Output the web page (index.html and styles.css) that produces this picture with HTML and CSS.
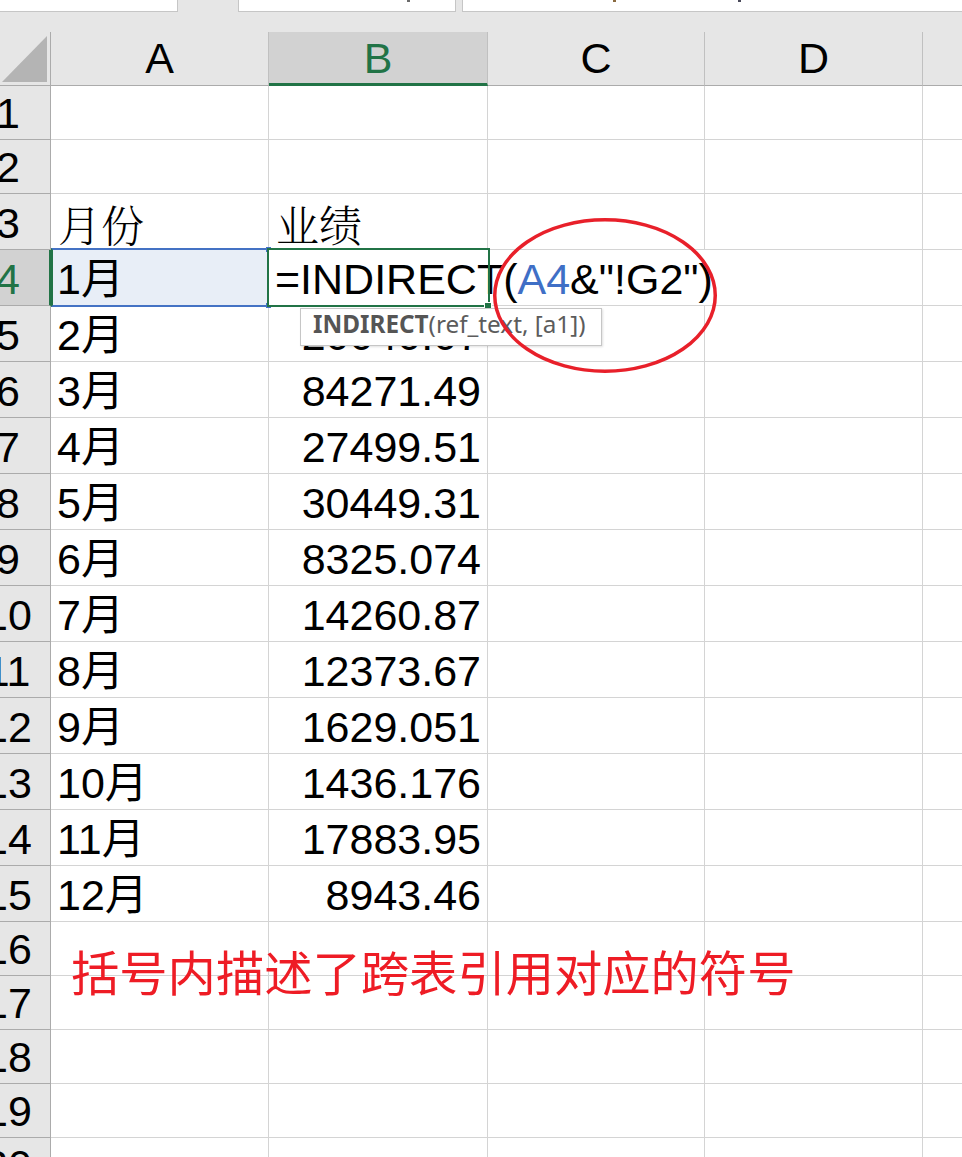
FILE: index.html
```html
<!DOCTYPE html>
<html lang="zh-CN">
<head>
<meta charset="utf-8">
<title>INDIRECT</title>
<link rel="stylesheet" href="styles.css">
</head>
<body>
<div class="topbar">
  <div class="tb tb1"></div>
  <div class="tb-gap1"></div>
  <div class="tb tb2"><span class="mark m1"></span></div>
  <div class="tb-gap2"></div>
  <div class="tb tb3"><span class="mark m2"></span><span class="mark m3"></span></div>
</div>
<div class="sheet">
  <div class="corner"><div class="tri"></div></div>
  <div class="ch">A</div>
  <div class="ch ch-active">B</div>
  <div class="ch">C</div>
  <div class="ch">D</div>
  <div class="ch ch-e"></div>

  <div class="rh"><span>1</span></div><div class="c"></div><div class="c"></div><div class="c"></div><div class="c"></div><div class="c e"></div>
  <div class="rh"><span>2</span></div><div class="c"></div><div class="c"></div><div class="c"></div><div class="c"></div><div class="c e"></div>
  <div class="rh"><span>3</span></div><div class="c song">月份</div><div class="c song">业绩</div><div class="c"></div><div class="c"></div><div class="c e"></div>
  <div class="rh rh-active"><span>4</span></div><div class="c range">1月</div><div class="c active">=INDIRECT(<span class="ref">A4</span>&amp;"!G2")</div><div class="c nogrid"></div><div class="c"></div><div class="c e"></div>
  <div class="rh"><span>5</span></div><div class="c">2月</div><div class="c num">20040.07</div><div class="c"></div><div class="c"></div><div class="c e"></div>
  <div class="rh"><span>6</span></div><div class="c">3月</div><div class="c num">84271.49</div><div class="c"></div><div class="c"></div><div class="c e"></div>
  <div class="rh"><span>7</span></div><div class="c">4月</div><div class="c num">27499.51</div><div class="c"></div><div class="c"></div><div class="c e"></div>
  <div class="rh"><span>8</span></div><div class="c">5月</div><div class="c num">30449.31</div><div class="c"></div><div class="c"></div><div class="c e"></div>
  <div class="rh"><span>9</span></div><div class="c">6月</div><div class="c num">8325.074</div><div class="c"></div><div class="c"></div><div class="c e"></div>
  <div class="rh"><span>10</span></div><div class="c">7月</div><div class="c num">14260.87</div><div class="c"></div><div class="c"></div><div class="c e"></div>
  <div class="rh"><span>11</span></div><div class="c">8月</div><div class="c num">12373.67</div><div class="c"></div><div class="c"></div><div class="c e"></div>
  <div class="rh"><span>12</span></div><div class="c">9月</div><div class="c num">1629.051</div><div class="c"></div><div class="c"></div><div class="c e"></div>
  <div class="rh"><span>13</span></div><div class="c">10月</div><div class="c num">1436.176</div><div class="c"></div><div class="c"></div><div class="c e"></div>
  <div class="rh"><span>14</span></div><div class="c">11月</div><div class="c num">17883.95</div><div class="c"></div><div class="c"></div><div class="c e"></div>
  <div class="rh"><span>15</span></div><div class="c">12月</div><div class="c num">8943.46</div><div class="c"></div><div class="c"></div><div class="c e"></div>
  <div class="rh"><span>16</span></div><div class="c"></div><div class="c"></div><div class="c"></div><div class="c"></div><div class="c e"></div>
  <div class="rh"><span>17</span></div><div class="c"></div><div class="c"></div><div class="c"></div><div class="c"></div><div class="c e"></div>
  <div class="rh"><span>18</span></div><div class="c"></div><div class="c"></div><div class="c"></div><div class="c"></div><div class="c e"></div>
  <div class="rh"><span>19</span></div><div class="c"></div><div class="c"></div><div class="c"></div><div class="c"></div><div class="c e"></div>
  <div class="rh"><span>20</span></div><div class="c"></div><div class="c"></div><div class="c"></div><div class="c"></div><div class="c e"></div>
</div>

<div class="tooltip"><b>INDIRECT</b>(ref_text, [a1])</div>

<svg class="circle" width="230" height="162" viewBox="0 0 230 162" aria-hidden="true">
  <ellipse cx="115" cy="80.5" rx="110.25" ry="75.75" fill="none" stroke="#e8202a" stroke-width="3.5"/>
</svg>

<div class="note">括号内描述了跨表引用对应的符号</div>
</body>
</html>
```

FILE: styles.css
```css
* {
  box-sizing: border-box;
  margin: 0;
  padding: 0;
}

html,
body {
  width: 962px;
  height: 1157px;
  overflow: hidden;
  background: #e6e6e6;
}

body {
  position: relative;
  font-family: "Liberation Sans", Arial, "Noto Sans CJK SC", sans-serif;
  color: #000;
}

/* ---------- top strip ---------- */
.topbar {
  display: flex;
  align-items: flex-start;
  height: 32px;
}

.tb {
  height: 12px;
  background: #fff;
  border-bottom: 1px solid #c6c6c6;
  display: flex;
  align-items: flex-start;
}

.tb1 {
  width: 178px;
  border-right: 1px solid #c6c6c6;
}

.tb-gap1 {
  width: 60px;
}

.tb2 {
  width: 218px;
  border-left: 1px solid #c6c6c6;
  border-right: 1px solid #c6c6c6;
}

.tb-gap2 {
  width: 6px;
}

.tb3 {
  flex: 1;
  border-left: 1px solid #c6c6c6;
}

.mark {
  display: block;
  width: 3px;
  height: 2px;
  background: #6b6b6b;
}

.m1 {
  margin-left: 168px;
}

.m2 {
  margin-left: 150px;
  background: #8a6a40;
}

.m3 {
  margin-left: 122px;
  background: #4a4a5a;
}

/* ---------- sheet grid ---------- */
.sheet {
  display: grid;
  grid-template-columns: 51px 218px 219px 217px 218px 1fr;
  grid-template-rows: 54px 54px 54px repeat(13, 56px) repeat(5, 54px);
  background: #fff;
  font-size: 43px;
  line-height: 43px;
}

.corner {
  background: #e6e6e6;
  border-right: 1px solid #ababab;
  border-bottom: 1px solid #ababab;
  padding: 4px 0 0 2px;
}

.tri {
  width: 45px;
  height: 46px;
  background: #b4b4b4;
  clip-path: polygon(100% 0, 100% 100%, 0 100%);
}

.ch {
  background: #e6e6e6;
  border-right: 1px solid #c0c0c0;
  border-bottom: 1px solid #ababab;
  display: flex;
  align-items: flex-end;
  justify-content: center;
  padding-bottom: 5px;
}

.ch-active {
  background: #d2d2d2;
  color: #217346;
  border-bottom: 3px solid #217346;
  padding-bottom: 3px;
}

.ch-e {
  border-right: none;
}

.rh {
  background: #e6e6e6;
  border-right: 1px solid #ababab;
  border-bottom: 1px solid #ababab;
  display: flex;
  align-items: flex-end;
  overflow: hidden;
  padding-bottom: 4px;
}

.rh span {
  flex: none;
  width: 84px;
  margin-left: -34px;
  text-align: center;
}

.rh-active {
  background: #d2d2d2;
  color: #217346;
  border-right: 2px solid #217346;
}

.c {
  background: #fff;
  border-right: 1px solid #d4d4d4;
  border-bottom: 1px solid #d4d4d4;
  display: flex;
  align-items: flex-end;
  padding: 0 6px 4px 6px;
  white-space: nowrap;
}

.c.e {
  border-right: none;
}

.num {
  justify-content: flex-end;
}

.song {
  font-family: "Noto Serif CJK SC", "Noto Sans CJK SC", serif;
  font-weight: 300;
  padding-left: 7px;
}

/* A4: referenced range */
.range {
  position: relative;
  background: #e8eef7;
}

.range::after {
  content: "";
  position: absolute;
  top: -2px;
  left: 0;
  right: 0;
  bottom: -2px;
  border-top: 2px solid #4472c4;
  border-bottom: 2px solid #4472c4;
  border-left: 2px solid #217346;
}

.range::before {
  content: "";
  position: absolute;
  right: -3px;
  top: -3px;
  width: 5px;
  height: 5px;
  background: #4472c4;
  box-shadow: 0 56px 0 #4472c4;
  z-index: 1;
}

/* B4: active cell with overflowing formula */
.active {
  position: relative;
  z-index: 2;
  border-right: none;
  overflow: visible;
}

.active::after {
  content: "";
  position: absolute;
  top: -2px;
  left: -2px;
  right: -2px;
  bottom: -2px;
  border: 2px solid #217346;
}

.active::before {
  content: "";
  position: absolute;
  right: -3px;
  bottom: -4px;
  width: 6px;
  height: 6px;
  background: #217346;
  outline: 1px solid #fff;
  z-index: 1;
}

.ref {
  color: #3f6fc6;
}

.nogrid {
  border-right: none;
}

/* ---------- overlays ---------- */
.tooltip {
  position: absolute;
  left: 300px;
  top: 308px;
  width: 302px;
  height: 38px;
  padding: 0 12px;
  background: #fff;
  border: 1px solid #c6c6c6;
  box-shadow: 1px 1px 2px rgba(0, 0, 0, 0.12);
  font-family: "Noto Sans", "Open Sans", sans-serif;
  font-size: 24.3px;
  line-height: 30px;
  color: #5c5c5c;
  white-space: nowrap;
  z-index: 5;
}

.tooltip b {
  font-weight: 700;
  color: #555;
}

.circle {
  position: absolute;
  left: 490px;
  top: 215px;
  z-index: 6;
}

.note {
  position: absolute;
  left: 71px;
  top: 946px;
  font-family: "Noto Sans CJK SC", sans-serif;
  font-size: 48.3px;
  line-height: 48px;
  color: #ee1c25;
  white-space: nowrap;
  z-index: 4;
}
```
